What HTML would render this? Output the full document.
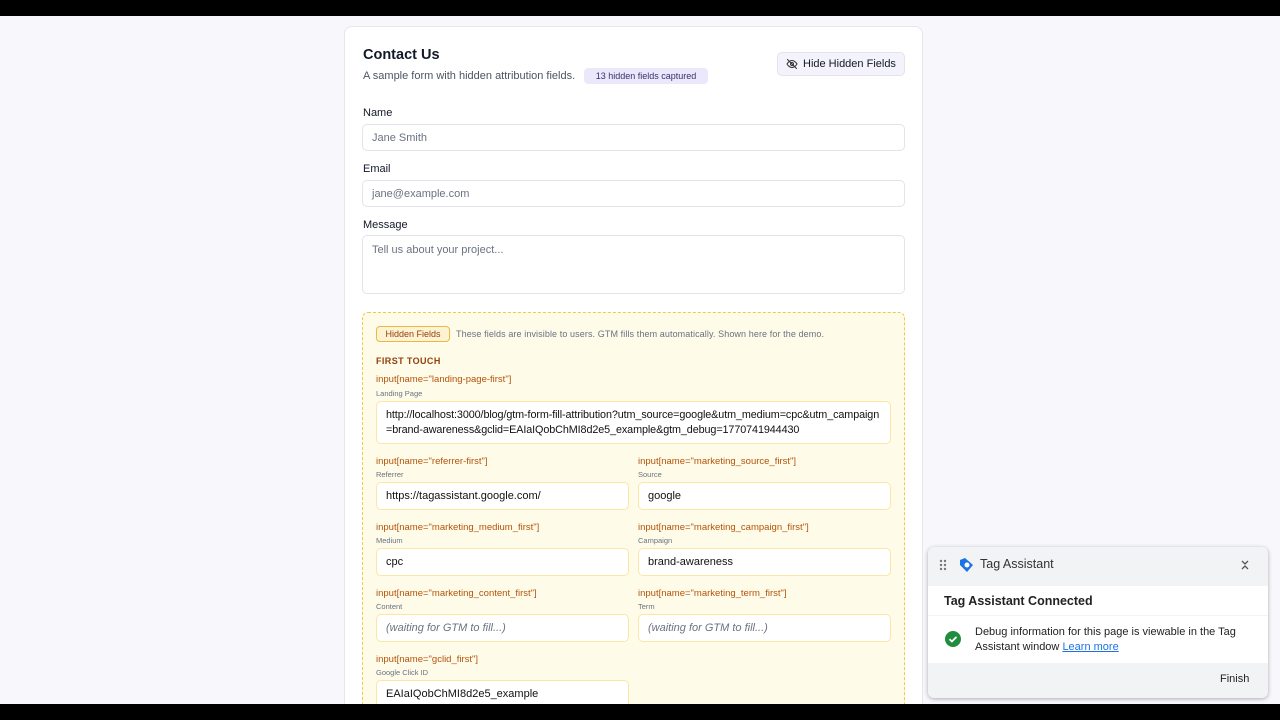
<!DOCTYPE html>
<html><head><style>
*{box-sizing:border-box;margin:0;padding:0}
html,body{width:1280px;height:720px;overflow:hidden}
body{background:#f7f7fc;font-family:"Liberation Sans",Arial,sans-serif;position:relative;color:#111827}
.bar{position:absolute;left:0;width:1280px;height:16px;background:#000;z-index:10}
.card{position:absolute;left:344px;top:26px;width:579px;height:690px;background:#fff;border:1px solid #e5e7eb;border-radius:8px}
.a{position:absolute}
.lbl{font-size:11px;color:#111827}
.inp{position:absolute;border:1px solid #e2e4ea;border-radius:5px;background:#fff;font-size:11px;color:#6b7280;padding:0 9px;display:flex;align-items:center}
.hid{position:absolute;left:362px;top:312px;width:543px;height:400px;background:#fefbe9;border:1.5px dashed #f0c94a;border-radius:6px}
.code{position:absolute;font-size:9.5px;color:#b45309}
.sub{position:absolute;font-size:7.5px;color:#6b7280}
.hi{position:absolute;background:#fff;border:1px solid #fbe6a6;border-radius:5px;font-size:11px;color:#111;padding:0 9px;display:flex;align-items:center;height:28px}
.w{font-style:italic;color:#6b7280}
</style></head><body>
<div class="bar" style="top:0"></div><div class="bar" style="top:704px"></div>
<div class="card"></div>
<div class="a" style="left:363px;top:47px;font-size:14.5px;font-weight:bold">Contact Us</div>
<div class="a" style="left:363px;top:70px;font-size:11px;color:#4b5563">A sample form with hidden attribution fields.</div>
<div class="a" style="left:584px;top:68px;width:124px;height:16px;background:#ece8fb;border-radius:4px;font-size:9px;color:#3b2f6e;text-align:center;line-height:16px">13 hidden fields captured</div>
<div class="a" style="left:777px;top:52px;width:128px;height:24px;background:#f4f3fb;border:1px solid #e3e2ee;border-radius:5px;font-size:11px;line-height:23px;padding-left:25px">Hide Hidden Fields</div>
<svg class="a" style="left:786px;top:58px" width="12" height="12" viewBox="0 0 24 24" fill="none" stroke="#333" stroke-width="2" stroke-linecap="round"><path d="M2 12s4-7 10-7 10 7 10 7-4 7-10 7S2 12 2 12z"/><circle cx="12" cy="12" r="3"/><path d="M3 3l18 18"/></svg>
<div class="a lbl" style="left:363px;top:107px">Name</div>
<div class="inp" style="left:362px;top:124px;width:543px;height:27px">Jane Smith</div>
<div class="a lbl" style="left:363px;top:163px">Email</div>
<div class="inp" style="left:362px;top:180px;width:543px;height:27px">jane@example.com</div>
<div class="a lbl" style="left:363px;top:219px">Message</div>
<div class="inp" style="left:362px;top:235px;width:543px;height:59px;align-items:flex-start;padding-top:8px">Tell us about your project...</div>
<div class="hid"></div>
<div class="a" style="left:376px;top:326px;width:74px;height:16px;border:1px solid #e8b84a;border-radius:4px;background:#fdf3d3;font-size:9px;color:#92400e;text-align:center;line-height:14px">Hidden Fields</div>
<div class="a" style="left:456px;top:329px;font-size:9px;color:#6b7280;letter-spacing:.1px">These fields are invisible to users. GTM fills them automatically. Shown here for the demo.</div>
<div class="a" style="left:376px;top:356px;font-size:9px;font-weight:bold;color:#92400e;letter-spacing:.4px">FIRST TOUCH</div>
<div class="code" style="left:376px;top:374px">input[name="landing-page-first"]</div>
<div class="sub" style="left:376px;top:389px">Landing Page</div>
<div class="hi" style="left:376px;top:401px;width:515px;height:43px;line-height:15px;word-break:break-all;font-size:10.8px;letter-spacing:-.1px">http://localhost:3000/blog/gtm-form-fill-attribution?utm_source=google&amp;utm_medium=cpc&amp;utm_campaign=brand-awareness&amp;gclid=EAIaIQobChMI8d2e5_example&amp;gtm_debug=1770741944430</div>
<div class="code" style="left:376px;top:456px">input[name="referrer-first"]</div><div class="sub" style="left:376px;top:470px">Referrer</div>
<div class="hi" style="left:376px;top:482px;width:253px">https://tagassistant.google.com/</div>
<div class="code" style="left:638px;top:456px">input[name="marketing_source_first"]</div><div class="sub" style="left:638px;top:470px">Source</div>
<div class="hi" style="left:638px;top:482px;width:253px">google</div>
<div class="code" style="left:376px;top:522px">input[name="marketing_medium_first"]</div><div class="sub" style="left:376px;top:536px">Medium</div>
<div class="hi" style="left:376px;top:548px;width:253px">cpc</div>
<div class="code" style="left:638px;top:522px">input[name="marketing_campaign_first"]</div><div class="sub" style="left:638px;top:536px">Campaign</div>
<div class="hi" style="left:638px;top:548px;width:253px">brand-awareness</div>
<div class="code" style="left:376px;top:588px">input[name="marketing_content_first"]</div><div class="sub" style="left:376px;top:602px">Content</div>
<div class="hi w" style="left:376px;top:614px;width:253px">(waiting for GTM to fill...)</div>
<div class="code" style="left:638px;top:588px">input[name="marketing_term_first"]</div><div class="sub" style="left:638px;top:602px">Term</div>
<div class="hi w" style="left:638px;top:614px;width:253px">(waiting for GTM to fill...)</div>
<div class="code" style="left:376px;top:654px">input[name="gclid_first"]</div><div class="sub" style="left:376px;top:668px">Google Click ID</div>
<div class="hi" style="left:376px;top:680px;width:253px">EAIaIQobChMI8d2e5_example</div>

<div class="a" style="left:928px;top:547px;width:340px;height:151px;background:#f1f3f4;border-radius:6px;box-shadow:0 1px 4px rgba(0,0,0,.3);overflow:hidden">
 <div class="a" style="left:0;top:39px;width:340px;height:29px;background:#fff"></div>
 <div class="a" style="left:0;top:69px;width:340px;height:47px;background:#fff"></div>
 <svg class="a" style="left:11px;top:12px" width="8" height="12" viewBox="0 0 8 12" fill="#777"><circle cx="2" cy="2" r="1.2"/><circle cx="6" cy="2" r="1.2"/><circle cx="2" cy="6" r="1.2"/><circle cx="6" cy="6" r="1.2"/><circle cx="2" cy="10" r="1.2"/><circle cx="6" cy="10" r="1.2"/></svg>
 <svg class="a" style="left:31px;top:10px" width="16" height="16" viewBox="0 0 16 16"><path d="M1 3 L6 1 L14 8 L8 15 L1 8Z" fill="#1a73e8"/><circle cx="8" cy="8" r="2.5" fill="#fff"/></svg>
 <div class="a" style="left:52px;top:10px;font-size:12.5px;color:#333">Tag Assistant</div>
 <svg class="a" style="left:312px;top:12px" width="10" height="12" viewBox="0 0 10 12" fill="none" stroke="#555" stroke-width="1.3"><path d="M2 2l3 3 3-3M2 10l3-3 3 3"/></svg>
 <div class="a" style="left:16px;top:47px;font-size:12.5px;font-weight:bold;color:#222">Tag Assistant Connected</div>
 <svg class="a" style="left:17px;top:84px" width="16" height="16" viewBox="0 0 16 16"><circle cx="8" cy="8" r="8" fill="#1e8e3e"/><path d="M4.5 8.2l2.4 2.3 4.6-4.6" stroke="#fff" stroke-width="1.8" fill="none"/></svg>
 <div class="a" style="left:47px;top:78px;width:290px;font-size:11px;line-height:15px;color:#222">Debug information for this page is viewable in the Tag Assistant window <span style="color:#1a73e8;text-decoration:underline">Learn more</span></div>
 <div class="a" style="left:292px;top:126px;font-size:11px;color:#222">Finish</div>
</div>
</body></html>
